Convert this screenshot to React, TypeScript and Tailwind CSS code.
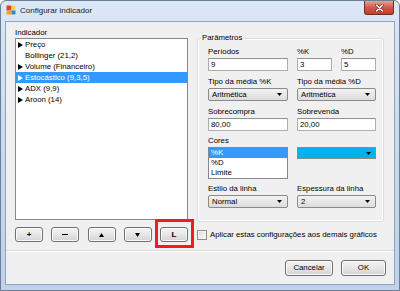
import React from "react";

function DownArrow() {
  return (
    <svg width="5" height="3" viewBox="0 0 5 3" className="block">
      <polygon points="0,0 5,0 2.5,3" fill="#000" />
    </svg>
  );
}

function RightTri({ white }: { white?: boolean }) {
  return (
    <svg width="5" height="6" viewBox="0 0 5 6" className="block">
      <polygon points="0,0 5,3 0,6" fill={white ? "#ffffff" : "#000000"} />
    </svg>
  );
}

function Label({ children }: { children: React.ReactNode }) {
  return <div className="h-[10px] leading-[10px] whitespace-nowrap">{children}</div>;
}

function TextBox({ value, className }: { value: string; className: string }) {
  return (
    <div className={"mt-[1px] h-[13px] bg-white border border-[#abadb3] border-t-[#8e9199] pl-[2px] flex items-center leading-[10px] " + className}>
      {value}
    </div>
  );
}

function Combo({ value, className }: { value: string; className: string }) {
  return (
    <div className={"mt-[1px] h-[13px] rounded-[2px] border border-[#8a8a8a] bg-gradient-to-b from-[#f3f3f3] to-[#dcdcdc] pl-[3px] pr-[5px] flex items-center justify-between leading-[10px] " + className}>
      <span>{value}</span>
      <DownArrow />
    </div>
  );
}

function Btn({ children, className }: { children: React.ReactNode; className: string }) {
  return (
    <div className={"rounded-[3px] border border-[#707070] bg-gradient-to-b from-[#f4f4f4] via-[#e6e6e6] to-[#d3d3d3] flex items-center justify-center shadow-[inset_0_0_0_1px_#fbfbfb] " + className}>
      {children}
    </div>
  );
}

export default function App() {
  const items = [
    { t: "Preço", tri: true },
    { t: "Bollinger (21,2)", tri: false },
    { t: "Volume (Financeiro)", tri: true },
    { t: "Estocástico (9,3,5)", tri: true, sel: true },
    { t: "ADX (9,9)", tri: true },
    { t: "Aroon (14)", tri: true },
  ];
  return (
    <div className="w-[400px] h-[291px] overflow-hidden rounded-t-[6px] border border-[#6d7f96] bg-gradient-to-b from-[#dbe7f5] via-[#c9daef] to-[#bfd2ea] flex flex-col font-['Liberation_Sans',Arial,sans-serif] text-[7.8px] text-black">
      {/* title bar */}
      <div className="h-[20px] flex items-start shrink-0">
        <div className="ml-[5px] mt-[4px] w-[10px] h-[10px]">
          <svg width="10" height="10" viewBox="0 0 10 10" className="block">
            <rect x="0" y="0" width="10" height="10" fill="#e9eef5" />
            <rect x="0.5" y="0.5" width="5" height="5" fill="#d9452a" />
            <rect x="0.5" y="5.5" width="5" height="4" fill="#f0a02a" />
            <rect x="5.5" y="0.5" width="4" height="5" fill="#f3d24a" />
            <rect x="5.5" y="5.5" width="4" height="4" fill="#3a7fd6" />
          </svg>
        </div>
        <div className="ml-[4px] mt-[4px] text-[8px] leading-[11px] text-[#1a1a1a]">Configurar indicador</div>
        <div className="ml-auto mr-[5px] w-[30px] h-[14px] rounded-b-[3px] border border-t-0 border-[#6e2b23] bg-gradient-to-b from-[#e9a08f] via-[#d05a47] to-[#c13f2d] flex items-center justify-center">
          <svg width="9" height="8" viewBox="0 0 9 8" className="block">
            <path d="M1.5 1 L7.5 7 M7.5 1 L1.5 7" stroke="#5a1c15" strokeWidth="2.6" strokeLinecap="round" />
            <path d="M1.5 1 L7.5 7 M7.5 1 L1.5 7" stroke="#ffffff" strokeWidth="1.6" strokeLinecap="round" />
          </svg>
        </div>
      </div>

      {/* client area */}
      <div className="flex-1 mx-[4px] mb-[5px] border border-[#8ea3bd] bg-[#f0f0f0] flex flex-col">
        <div className="h-[228px] flex shrink-0">
          {/* left column */}
          <div className="ml-[9px] w-[173px] flex flex-col">
            <div className="mt-[6px]">
              <Label>Indicador</Label>
            </div>
            <div className="h-[182px] bg-white border border-[#828790] flex flex-col">
              {items.map((it) => (
                <div
                  key={it.t}
                  className={
                    "h-[11px] flex items-center leading-[10px] " +
                    (it.sel ? "bg-[#3399ff] text-white" : "")
                  }
                >
                  <div className="w-[9px] pl-[2px] flex items-center">
                    {it.tri ? <RightTri white={!!it.sel} /> : null}
                  </div>
                  <span>{it.t}</span>
                </div>
              ))}
            </div>
            <div className="mt-[7px] h-[15px] flex justify-between">
              <Btn className="w-[28px] h-[15px]">
                <span className="font-bold text-[8px] leading-[8px]">+</span>
              </Btn>
              <Btn className="w-[28px] h-[15px]">
                <span className="block w-[6px] h-[1.5px] bg-black" />
              </Btn>
              <Btn className="w-[28px] h-[15px]">
                <svg width="5" height="4" viewBox="0 0 5 4" className="block">
                  <polygon points="2.5,0 5,4 0,4" fill="#000" />
                </svg>
              </Btn>
              <Btn className="w-[28px] h-[15px]">
                <svg width="5" height="4" viewBox="0 0 5 4" className="block">
                  <polygon points="0,0 5,0 2.5,4" fill="#000" />
                </svg>
              </Btn>
              <div className="relative">
                <Btn className="w-[28px] h-[15px]">
                  <span className="font-bold text-[8px] leading-[8px]">L</span>
                </Btn>
                <div className="absolute -left-[5px] -right-[6px] -top-[8px] -bottom-[6px] border-[3px] border-[#ee1c24]" />
              </div>
            </div>
          </div>

          {/* right column */}
          <div className="ml-[9px] w-[187px] flex flex-col">
            <div className="mt-[16px] h-[184px] relative rounded-[3px] border border-[#d5dfe5] shadow-[inset_0_0_0_1px_#ffffff]">
              <div className="absolute -top-[6px] left-[3px] px-[1px] bg-[#f0f0f0] leading-[10px]">Parâmetros</div>
              <div className="pl-[10px] pt-[8px] flex flex-col">
                {/* row 1 */}
                <div className="flex gap-[9px]">
                  <div className="w-[80px]">
                    <Label>Períodos</Label>
                    <TextBox value="9" className="w-[80px]" />
                  </div>
                  <div className="w-[35px]">
                    <Label>%K</Label>
                    <TextBox value="3" className="w-[35px]" />
                  </div>
                  <div className="w-[35px]">
                    <Label>%D</Label>
                    <TextBox value="5" className="w-[35px]" />
                  </div>
                </div>
                {/* row 2 */}
                <div className="mt-[6px] flex gap-[9px]">
                  <div className="w-[80px]">
                    <Label>Tipo da média %K</Label>
                    <Combo value="Aritmética" className="w-[80px]" />
                  </div>
                  <div className="w-[79px]">
                    <Label>Tipo da média %D</Label>
                    <Combo value="Aritmética" className="w-[79px]" />
                  </div>
                </div>
                {/* row 3 */}
                <div className="mt-[6px] flex gap-[9px]">
                  <div className="w-[80px]">
                    <Label>Sobrecompra</Label>
                    <TextBox value="80,00" className="w-[80px]" />
                  </div>
                  <div className="w-[79px]">
                    <Label>Sobrevenda</Label>
                    <TextBox value="20,00" className="w-[79px]" />
                  </div>
                </div>
                {/* row 4 */}
                <div className="mt-[5px] flex gap-[9px]">
                  <div className="w-[80px]">
                    <Label>Cores</Label>
                    <div className="mt-[1px] w-[80px] h-[32px] bg-white border border-[#828790] flex flex-col">
                      <div className="h-[10px] bg-[#3399ff] text-white pl-[2px] leading-[10px]">%K</div>
                      <div className="h-[10px] pl-[2px] leading-[10px]">%D</div>
                      <div className="h-[10px] pl-[2px] leading-[10px]">Limite</div>
                    </div>
                  </div>
                  <div className="w-[79px] pt-[11px]">
                    <div className="w-[79px] h-[12px] border border-[#8a8a8a] bg-[#00b2f0] flex items-center justify-end pr-[4px]">
                      <DownArrow />
                    </div>
                  </div>
                </div>
                {/* row 5 */}
                <div className="mt-[5px] flex gap-[9px]">
                  <div className="w-[80px]">
                    <Label>Estilo da linha</Label>
                    <Combo value="Normal" className="w-[80px]" />
                  </div>
                  <div className="w-[79px]">
                    <Label>Espessura da linha</Label>
                    <Combo value="2" className="w-[79px]" />
                  </div>
                </div>
              </div>
            </div>
            <div className="mt-[7px] h-[12px] flex items-center">
              <div className="w-[10px] h-[10px] border border-[#8f8f8f] bg-gradient-to-br from-[#dcdcdc] to-[#fbfbfb] shadow-[inset_0_0_0_1px_#f4f4f4]" />
              <span className="ml-[3px] leading-[10px] whitespace-nowrap">Aplicar estas configurações aos demais gráficos</span>
            </div>
          </div>
        </div>

        {/* separator */}
        <div className="h-px bg-[#d9d9d9] shrink-0" />
        <div className="h-px bg-white shrink-0" />

        {/* bottom buttons */}
        <div className="mt-[8px] flex justify-end gap-[8px] pr-[8px]">
          <Btn className="w-[48px] h-[16px]">
            <span className="leading-[10px]">Cancelar</span>
          </Btn>
          <Btn className="w-[45px] h-[16px]">
            <span className="leading-[10px]">OK</span>
          </Btn>
        </div>
      </div>
    </div>
  );
}
